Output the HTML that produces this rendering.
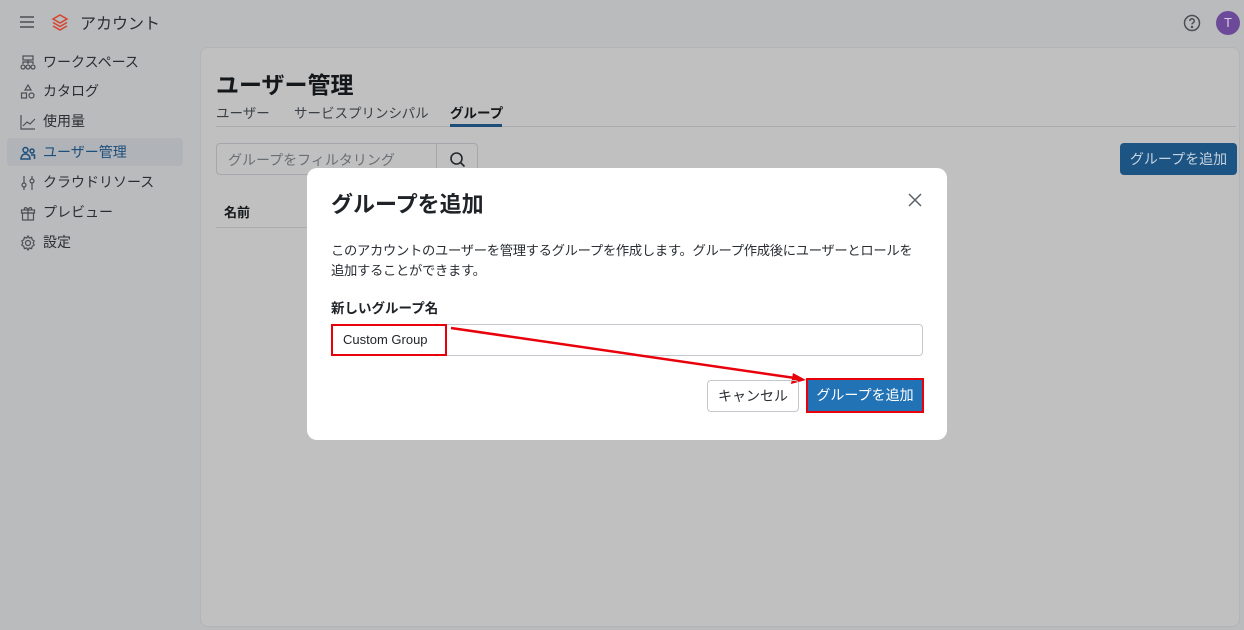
<!DOCTYPE html>
<html><head><meta charset="utf-8"><style>
*{box-sizing:border-box;margin:0;padding:0}
body{width:1244px;height:630px;overflow:hidden;background:#babbbd;font-family:"Liberation Sans","Noto Sans CJK JP",sans-serif;color:#1f2327;position:relative}
.abs{position:absolute}
.nav{font-size:14px;color:#2a2e33}
.nav div{position:absolute;left:20px;height:28px;line-height:28px;white-space:nowrap}
.nav svg{position:absolute;left:0;top:7px}
.nav span{position:absolute;left:23px}
.panel{left:200px;top:47px;width:1040px;height:580px;background:#c0c0c0;border:1px solid #b3b4b6;border-radius:8px}
.modal{left:307px;top:168px;width:640px;height:272px;background:#fff;border-radius:10px}
</style></head><body>
<svg class="abs" style="left:19px;top:15px" width="16" height="14" viewBox="0 0 16 14"><path d="M1 2h14M1 7h14M1 12h14" stroke="#4a4f55" stroke-width="1.6"/></svg>
<svg class="abs" style="left:51px;top:13px" width="18" height="18" viewBox="0 0 18 18" fill="none" stroke="#d6442f" stroke-width="1.5"><path d="M2 6l7-4 7 4-7 4z"/><path d="M2 9.5l7 4 7-4"/><path d="M2 13l7 4 7-4"/></svg>
<div class="abs" style="left:80px;top:10px;font-size:16px;color:#2a2e33">アカウント</div>
<svg class="abs" style="left:1183px;top:14px" width="18" height="18" viewBox="0 0 18 18" fill="none" stroke="#4a4f55" stroke-width="1.5"><circle cx="9" cy="9" r="7.5"/><path d="M6.8 7a2.2 2.2 0 1 1 3 2c-.6.3-.8.7-.8 1.4"/><circle cx="9" cy="13" r=".5" fill="#4a4f55"/></svg>
<div class="abs" style="left:1216px;top:11px;width:24px;height:24px;border-radius:50%;background:#6c4a99;color:#d8cce6;font-size:13px;text-align:center;line-height:24px">T</div>
<div class="abs" style="left:7px;top:138px;width:176px;height:28px;background:#b0b3b7;border-radius:4px"></div>
<div class="nav">
<div style="top:48px"><svg width="16" height="16" viewBox="0 0 16 16" fill="none" stroke="#4a4f55" stroke-width="1.2"><rect x="3" y="1" width="10" height="4"/><path d="M8 5v4M3 9v-2h10v2"/><circle cx="3" cy="12" r="2"/><circle cx="8" cy="12" r="2"/><circle cx="13" cy="12" r="2"/></svg><span>ワークスペース</span></div>
<div style="top:77px"><svg width="16" height="16" viewBox="0 0 16 16" fill="none" stroke="#4a4f55" stroke-width="1.2"><path d="M8 1l3 5H5z"/><rect x="1.5" y="9" width="5" height="5"/><circle cx="11.5" cy="11.5" r="2.5"/></svg><span>カタログ</span></div>
<div style="top:107px"><svg width="16" height="16" viewBox="0 0 16 16" fill="none" stroke="#4a4f55" stroke-width="1.2"><path d="M1 1v14h14M3 12l4-4 3 2 5-5"/></svg><span>使用量</span></div>
<div style="top:138px;color:#1d4f7a"><svg width="16" height="16" viewBox="0 0 16 16" fill="none" stroke="#1d4f7a" stroke-width="1.5"><circle cx="5.5" cy="5" r="2.5"/><path d="M1 14c0-3 2-5 4.5-5s4.5 2 4.5 5z"/><circle cx="12" cy="6" r="2"/><path d="M11 10h3.5v4"/></svg><span>ユーザー管理</span></div>
<div style="top:168px"><svg width="16" height="16" viewBox="0 0 16 16" fill="none" stroke="#4a4f55" stroke-width="1.2"><path d="M4 1v14M12 1v14"/><circle cx="4" cy="10" r="2" fill="#babbbd"/><circle cx="12" cy="6" r="2" fill="#babbbd"/></svg><span>クラウドリソース</span></div>
<div style="top:198px"><svg width="16" height="16" viewBox="0 0 16 16" fill="none" stroke="#4a4f55" stroke-width="1.2"><rect x="1.5" y="5" width="13" height="3"/><rect x="2.5" y="8" width="11" height="7"/><path d="M8 5v10M8 5C6 1 3 3 5 5M8 5c2-4 5-2 3 0"/></svg><span>プレビュー</span></div>
<div style="top:228px"><svg width="16" height="16" viewBox="0 0 16 16" fill="none" stroke="#4a4f55" stroke-width="1.2"><circle cx="8" cy="8" r="2.5"/><path d="M8 1l1.3 2 2.3-.6.6 2.3 2 1.3-1 2 1 2-2 1.3-.6 2.3-2.3-.6L8 15l-1.3-2-2.3.6-.6-2.3-2-1.3 1-2-1-2 2-1.3.6-2.3 2.3.6z"/></svg><span>設定</span></div>
</div>
<div class="abs panel"></div>
<div class="abs" style="left:216px;top:66px;font-size:23px;font-weight:bold;color:#15181b">ユーザー管理</div>
<div class="abs" style="left:216px;top:102px;font-size:13.5px;color:#3a3f45">ユーザー</div>
<div class="abs" style="left:294px;top:102px;font-size:13.5px;color:#3a3f45">サービスプリンシパル</div>
<div class="abs" style="left:450px;top:102px;font-size:13.5px;color:#15181b;font-weight:bold">グループ</div>
<div class="abs" style="left:216px;top:126px;width:1020px;height:1px;background:#a9abae"></div>
<div class="abs" style="left:450px;top:124px;width:52px;height:3px;background:#1d4f7a"></div>
<div class="abs" style="left:216px;top:143px;width:262px;height:32px;border:1px solid #a4a7ab;border-radius:4px"></div>
<div class="abs" style="left:436px;top:143px;width:1px;height:32px;background:#a4a7ab"></div>
<div class="abs" style="left:228px;top:150px;font-size:14px;color:#6a6f75">グループをフィルタリング</div>
<svg class="abs" style="left:449px;top:151px" width="17" height="17" viewBox="0 0 17 17" fill="none" stroke="#24282c" stroke-width="1.6"><circle cx="7.5" cy="7.5" r="5.5"/><path d="M11.5 11.5l4 4"/></svg>
<div class="abs" style="left:1120px;top:143px;width:117px;height:32px;background:#1c5483;border-radius:4px;color:#c7d3de;font-size:14px;text-align:center;line-height:32px">グループを追加</div>
<div class="abs" style="left:224px;top:202px;font-size:13px;font-weight:bold;color:#15181b">名前</div>
<div class="abs" style="left:216px;top:227px;width:100px;height:1px;background:#a9abae"></div>
<div class="abs modal"></div>
<div class="abs" style="left:331px;top:187px;font-size:22px;font-weight:bold;color:#1f2327">グループを追加</div>
<svg class="abs" style="left:908px;top:193px" width="14" height="14" viewBox="0 0 14 14" stroke="#5a6067" stroke-width="1.5"><path d="M1 1l12 12M13 1L1 13"/></svg>
<div class="abs" style="left:331px;top:241px;width:620px;font-size:13.3px;line-height:20px;color:#2a2e33;white-space:nowrap;letter-spacing:-0.3px">このアカウントのユーザーを管理するグループを作成します。グループ作成後にユーザーとロールを<br>追加することができます。</div>
<div class="abs" style="left:331px;top:297px;font-size:13.5px;font-weight:bold;color:#1f2327">新しいグループ名</div>
<div class="abs" style="left:331px;top:324px;width:592px;height:32px;border:1px solid #c4c8cc;border-radius:4px"></div>
<div class="abs" style="left:331px;top:324px;width:116px;height:32px;border:2.5px solid #e8000b"></div>
<div class="abs" style="left:343px;top:332px;font-size:13px;color:#1f2327">Custom Group</div>
<svg class="abs" style="left:440px;top:320px" width="370" height="70" viewBox="440 320 370 70"><path d="M451 328L795 378" stroke="#e8000b" stroke-width="2.5"/><path d="M806 380l-15 4 2-11z" fill="#e8000b"/></svg>
<div class="abs" style="left:707px;top:380px;width:92px;height:32px;border:1px solid #c4c8cc;border-radius:4px;font-size:14px;text-align:center;line-height:30px;color:#2a2e33">キャンセル</div>
<div class="abs" style="left:806px;top:378px;width:118px;height:35px;background:#2272b6;border:2.5px solid #e8000b;font-size:14px;text-align:center;line-height:30px;color:#fff">グループを追加</div>
</body></html>
